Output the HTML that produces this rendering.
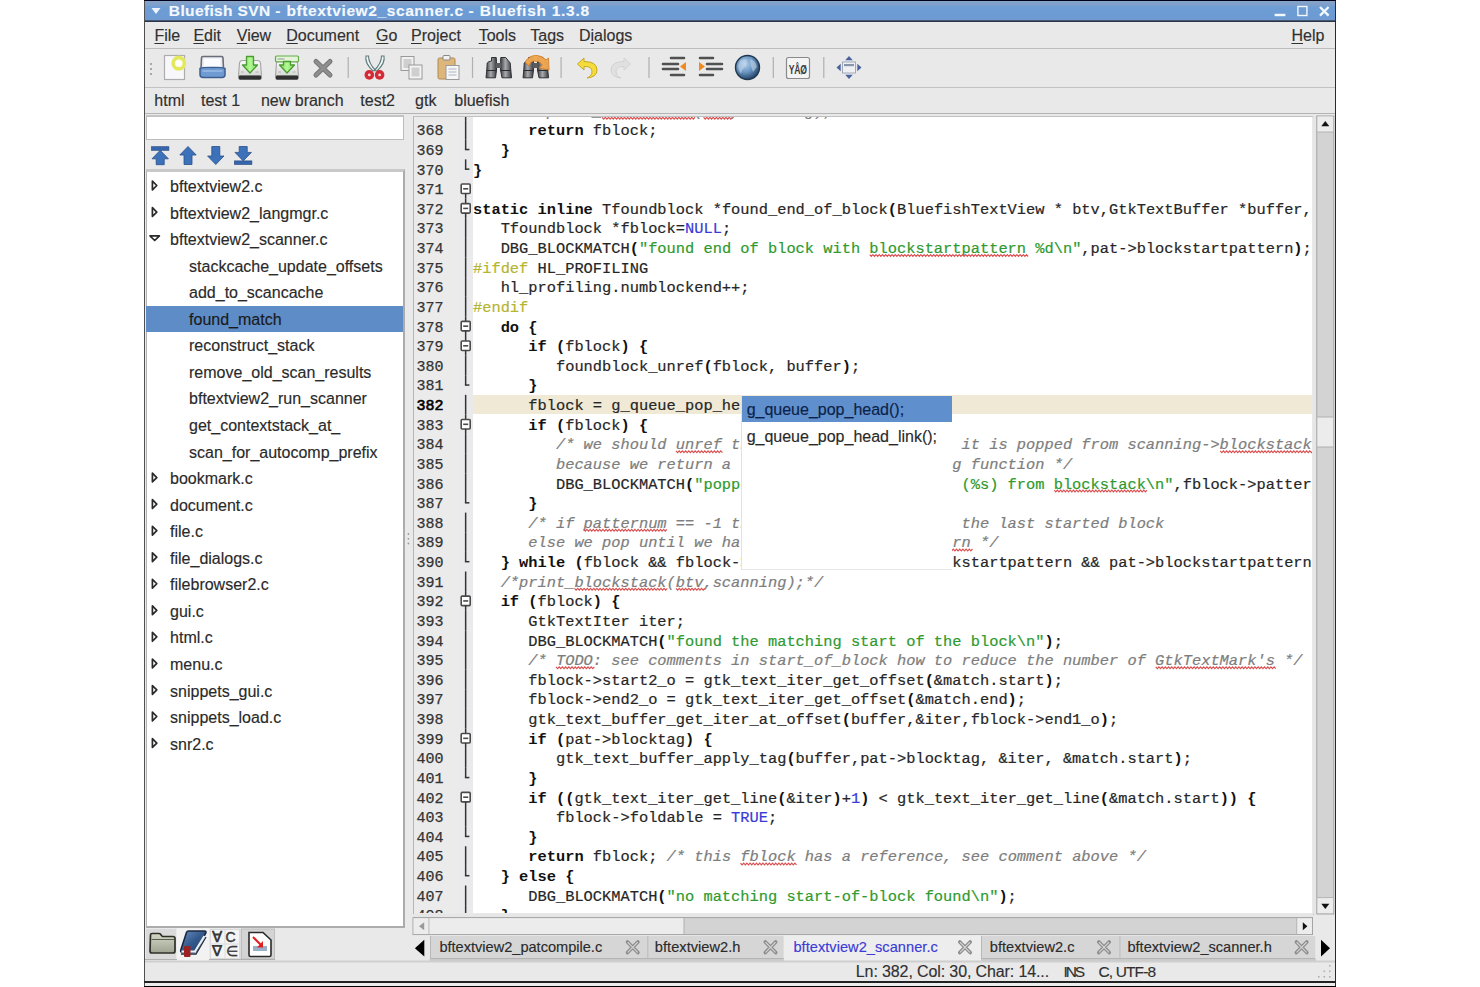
<!DOCTYPE html><html><head><meta charset="utf-8"><title>Bluefish</title><style>
*{box-sizing:border-box;margin:0;padding:0}
html,body{width:1480px;height:987px;overflow:hidden;background:#fff}
body{position:relative;font-family:"Liberation Sans",sans-serif;color:#222}
.a{position:absolute}
.t{position:absolute;white-space:pre;font-size:16px;line-height:18px;color:#303030;-webkit-text-stroke:0.15px currentColor}
.u{text-decoration:underline;text-decoration-thickness:1.2px;text-underline-offset:1.5px}
#code{position:absolute;left:414px;top:117px;width:898px;height:796px;overflow:hidden;background:#fff}
.ln{position:absolute;left:0;width:46px;white-space:pre;-webkit-text-stroke:0.25px #333;font-family:"Liberation Mono",monospace;font-size:15px;line-height:19.626px;color:#333;text-align:left;padding-left:2.5px}
.cl{position:absolute;left:59px;white-space:pre;-webkit-text-stroke:0.2px currentColor;font-family:"Liberation Mono",monospace;font-size:15.373px;line-height:19.626px;color:#262626}
.k{font-weight:bold;color:#111;-webkit-text-stroke:0}
.s{color:#2f9a2f}
.c{color:#7d7d7d;font-style:italic}
.p{color:#b5b531}
.b{color:#3a3ad8}
</style></head><body>
<div class="a" style="left:144px;top:0;width:1192px;height:987px;background:#e9e9e9"></div>
<div class="a" style="left:144px;top:0;width:1.2px;height:987px;background:#505050"></div>
<div class="a" style="left:1335px;top:0;width:1.3px;height:987px;background:#2a2a2a"></div>
<div class="a" style="left:144px;top:0;width:1192px;height:1px;background:#00001a"></div>
<div class="a" style="left:145px;top:1px;width:1190px;height:20px;background:linear-gradient(#86a3c6 0px,#7ea0cc 4px,#6e9dd5 6px,#6c9bd3 17px,#7299cf 19px)"></div>
<div class="a" style="left:145px;top:20px;width:1190px;height:2px;background:linear-gradient(#566a88,#1a2234)"></div>
<div class="t" style="left:168.87px;top:1.63px;font-size:15.50px;letter-spacing:0.361px;font-weight:bold;color:#f4f8fc;">Bluefish SVN -</div>
<div class="t" style="left:286.47px;top:1.63px;font-size:15.50px;letter-spacing:0.600px;font-weight:bold;color:#f4f8fc;">bftextview2_scanner.c</div>
<div class="t" style="left:468.57px;top:1.63px;font-size:15.50px;font-weight:bold;color:#f4f8fc;">-</div>
<div class="t" style="left:479.77px;top:1.63px;font-size:15.50px;letter-spacing:0.718px;font-weight:bold;color:#f4f8fc;">Bluefish 1.3.8</div>
<svg class="a" style="left:150px;top:6px" width="12" height="10"><path d="M1.5 2 L10.5 2 L6 8 Z" fill="#eef4fb"/></svg>
<svg class="a" style="left:0;top:0" width="1480" height="22"><rect x="1274.6" y="13.8" width="10.8" height="2.4" fill="#f2f8fc"/><rect x="1297.9" y="6.5" width="9" height="9" fill="none" stroke="#f2f8fc" stroke-width="1.4"/><path d="M1320 7 L1328.6 15.6 M1328.6 7 L1320 15.6" stroke="#f2f8fc" stroke-width="2.3"/></svg>
<div class="a" style="left:144px;top:981px;width:1192px;height:1.5px;background:#222"></div>
<div class="a" style="left:145px;top:982.5px;width:1190px;height:3.5px;background:#ececec"></div>
<div class="a" style="left:144px;top:986px;width:1192px;height:1px;background:#000"></div>
<div class="t" style="left:154.44px;top:26.96px;font-size:16.00px;"><span class="u">F</span>ile</div>
<div class="t" style="left:193.44px;top:26.96px;font-size:16.00px;"><span class="u">E</span>dit</div>
<div class="t" style="left:236.74px;top:26.96px;font-size:16.00px;"><span class="u">V</span>iew</div>
<div class="t" style="left:286.24px;top:26.96px;font-size:16.00px;"><span class="u">D</span>ocument</div>
<div class="t" style="left:375.94px;top:26.96px;font-size:16.00px;"><span class="u">G</span>o</div>
<div class="t" style="left:411.04px;top:26.96px;font-size:16.00px;"><span class="u">P</span>roject</div>
<div class="t" style="left:478.64px;top:26.96px;font-size:16.00px;"><span class="u">T</span>ools</div>
<div class="t" style="left:530.24px;top:26.96px;font-size:16.00px;">T<span class="u">a</span>gs</div>
<div class="t" style="left:578.94px;top:26.96px;font-size:16.00px;">D<span class="u">i</span>alogs</div>
<div class="t" style="left:1291.44px;top:26.96px;font-size:16.00px;"><span class="u">H</span>elp</div>
<div class="a" style="left:145px;top:47.5px;width:1190px;height:1px;background:#bdbdbd"></div>
<div class="a" style="left:145px;top:87px;width:1190px;height:1px;background:#c2c2c2"></div>
<div class="t" style="left:154.34px;top:92.06px;font-size:16.00px;">html</div>
<div class="t" style="left:200.94px;top:92.06px;font-size:16.00px;">test 1</div>
<div class="t" style="left:260.94px;top:92.06px;font-size:16.00px;">new branch</div>
<div class="t" style="left:360.34px;top:92.06px;font-size:16.00px;">test2</div>
<div class="t" style="left:415.04px;top:92.06px;font-size:16.00px;">gtk</div>
<div class="t" style="left:454.24px;top:92.06px;font-size:16.00px;">bluefish</div>
<div class="a" style="left:145px;top:113px;width:1190px;height:1px;background:#b4b4b4"></div>
<svg class="a" style="left:0;top:0" width="900" height="90" viewBox="0 0 900 90"><rect x="150" y="63" width="2" height="2" fill="#a8a8a8"/><rect x="150" y="68" width="2" height="2" fill="#a8a8a8"/><rect x="150" y="73" width="2" height="2" fill="#a8a8a8"/><rect x="347.6" y="57" width="1.2" height="21" fill="#b0b0b0"/><rect x="471.9" y="57" width="1.2" height="21" fill="#b0b0b0"/><rect x="560.5" y="57" width="1.2" height="21" fill="#b0b0b0"/><rect x="648.4" y="57" width="1.2" height="21" fill="#b0b0b0"/><rect x="772.7" y="57" width="1.2" height="21" fill="#b0b0b0"/><rect x="823.2" y="57" width="1.2" height="21" fill="#b0b0b0"/><rect x="164.5" y="55.5" width="20" height="24" fill="#f8f8fc" stroke="#acacac" stroke-width="1.2"/><circle cx="178.8" cy="63.2" r="7.8" fill="#f4f6b0" opacity="0.45"/><circle cx="178.8" cy="63.2" r="5.6" fill="#fcfcf0" stroke="#e4e85c" stroke-width="3.6"/><path d="M178.8 59.6 L179.9 62.2 L182.5 62.3 L180.5 64.1 L181.2 66.7 L178.8 65.3 L176.4 66.7 L177.1 64.1 L175.1 62.3 L177.7 62.2 Z" fill="#fff"/><path d="M201.5 58 Q201.5 56.5 203 56.5 L221.5 56.5 Q223 56.5 223 58 L223.5 69 L201 69 Z" fill="#e8ebf0" stroke="#6a6e78" stroke-width="1.6"/><rect x="204" y="58.5" width="16.5" height="10" fill="#fafcff"/><path d="M200 68.5 Q203 67 212.5 67.5 Q222 67 225 68.5 L225 74.5 Q225 77.5 222 77.5 L203 77.5 Q200 77.5 200 74.5 Z" fill="#6f9bd2" stroke="#3d5f90" stroke-width="1.5"/><path d="M202.5 71 L222.5 71" stroke="#a6c4ea" stroke-width="1.2"/><defs><linearGradient id="drv" x1="0" y1="0" x2="0" y2="1"><stop offset="0" stop-color="#fafafa"/><stop offset="1" stop-color="#d6d8d6"/></linearGradient><linearGradient id="arw" x1="0" y1="0" x2="1" y2="0"><stop offset="0" stop-color="#7ad860"/><stop offset="0.5" stop-color="#b4fa94"/><stop offset="1" stop-color="#7ad860"/></linearGradient></defs><path d="M238.5 76 L239.5 63 Q240.0 60.5 242.5 60.5 L257.5 60.5 Q260.0 60.5 260.5 63 L261.5 76 Z" fill="url(#drv)" stroke="#a4a4a4" stroke-width="1.1"/><rect x="238.5" y="75.5" width="23" height="4.2" rx="1.6" fill="#303030"/><path d="M241.0 72 h3 M255.5 72 h3" stroke="#b0b0b0" stroke-width="1"/><path d="M246.5 56.5 L253.5 56.5 L253.5 65 L257.5 65 L250 73 L242.5 65 L246.5 65 Z" fill="url(#arw)" stroke="#4c9a34" stroke-width="1.3" stroke-linejoin="round"/><path d="M275.5 76 L276.5 63 Q277.0 60.5 279.5 60.5 L294.5 60.5 Q297.0 60.5 297.5 63 L298.5 76 Z" fill="url(#drv)" stroke="#a4a4a4" stroke-width="1.1"/><rect x="275.5" y="75.5" width="23" height="4.2" rx="1.6" fill="#303030"/><path d="M278.0 72 h3 M292.5 72 h3" stroke="#b0b0b0" stroke-width="1"/><rect x="275.5" y="56" width="23" height="5.8" rx="1" fill="#e4f4d8" stroke="#62aa48" stroke-width="1.2"/><rect x="277.5" y="58" width="7" height="2" fill="#b8c8b0"/><path d="M283.5 61.5 L290.5 61.5 L290.5 65 L294.5 65 L287 73 L279.5 65 L283.5 65 Z" fill="url(#arw)" stroke="#4c9a34" stroke-width="1.3" stroke-linejoin="round"/><path d="M316 61.5 L330 75 M330 61.5 L316 75" stroke="#767676" stroke-width="5" stroke-linecap="round"/><path d="M316 61.5 L330 75 M330 61.5 L316 75" stroke="#8e8e8e" stroke-width="3" stroke-linecap="round"/><path d="M366 56 Q364.5 63 373 71 L375.5 70.5 Q368.5 63 368.5 56 Z" fill="#eef6f6" stroke="#5e7a7a" stroke-width="1.1"/><path d="M384 56 Q385.5 63 377 71 L374.5 70.5 Q381.5 63 381.5 56 Z" fill="#eef6f6" stroke="#5e7a7a" stroke-width="1.1"/><circle cx="369.3" cy="74.9" r="4.8" fill="#d42a36"/><circle cx="379.6" cy="74.9" r="4.8" fill="#d42a36"/><circle cx="369.3" cy="74.9" r="1.4" fill="#f6dada"/><circle cx="379.6" cy="74.9" r="1.4" fill="#f6dada"/><rect x="401" y="56.5" width="13" height="14" fill="#f0f0f0" stroke="#9a9a9a"/><rect x="403.5" y="59" width="8" height="9" fill="#cfcfcf"/><rect x="409" y="65" width="13" height="14" fill="#f4f4f4" stroke="#9a9a9a"/><rect x="411.5" y="67.5" width="8" height="9" fill="#cfcfcf"/><rect x="438" y="58" width="17" height="21" rx="1.5" fill="#dcb67a" stroke="#b08a50"/><rect x="443" y="55.5" width="7" height="4.5" rx="1" fill="#f2f2f2" stroke="#888"/><rect x="446" y="65.5" width="13" height="14" fill="#f6f6f6" stroke="#9a9a9a"/><path d="M448.5 69 h8 M448.5 72 h8 M448.5 75 h8" stroke="#a9b4c6" stroke-width="1.2"/><g transform="translate(0.0,0)"><defs><linearGradient id="bn485" x1="0" x2="1"><stop offset="0" stop-color="#3a3c40"/><stop offset="0.45" stop-color="#a8aaae"/><stop offset="1" stop-color="#3a3c40"/></linearGradient></defs><path d="M491.5 57.5 L496.2 57.5 L496.5 61.5 L496.5 70 L495.5 77.8 L486 77.8 L486.8 70 L487.2 63 Q488 61.5 491.5 61 Z" fill="url(#bn485)" stroke="#303236" stroke-width="1"/><path d="M500.8 57.5 L505.7 57.5 Q509 61.5 510.2 63 L510.8 70 L511.5 77.8 L502 77.8 L500.5 70 L500.5 61.5 Z" fill="url(#bn485)" stroke="#303236" stroke-width="1"/><rect x="496" y="63" width="5" height="5" fill="#5a5c60"/><path d="M486.6 70.5 H496 M501 70.5 H510.8" stroke="#2a2c30" stroke-width="1.2"/></g><g transform="translate(37.0,0)"><defs><linearGradient id="bn522" x1="0" x2="1"><stop offset="0" stop-color="#3a3c40"/><stop offset="0.45" stop-color="#a8aaae"/><stop offset="1" stop-color="#3a3c40"/></linearGradient></defs><path d="M491.5 57.5 L496.2 57.5 L496.5 61.5 L496.5 70 L495.5 77.8 L486 77.8 L486.8 70 L487.2 63 Q488 61.5 491.5 61 Z" fill="url(#bn522)" stroke="#303236" stroke-width="1"/><path d="M500.8 57.5 L505.7 57.5 Q509 61.5 510.2 63 L510.8 70 L511.5 77.8 L502 77.8 L500.5 70 L500.5 61.5 Z" fill="url(#bn522)" stroke="#303236" stroke-width="1"/><rect x="496" y="63" width="5" height="5" fill="#5a5c60"/><path d="M486.6 70.5 H496 M501 70.5 H510.8" stroke="#2a2c30" stroke-width="1.2"/></g><path d="M525 62 Q529 55 537 55.5 Q543 56 546 60 L548.5 58 L549 70 L539 68 L542.5 65 Q539 60.5 534 61 Q530 61.5 529 66 Z" fill="#f2a850" stroke="#d07a20" stroke-width="0.9" opacity="0.95"/><path d="M584 58 L577.5 64 L584 70 L584 66.5 Q592 66 592 71.5 Q592 76 587 78 Q597 77 597 70 Q597 61.5 584 61.5 Z" fill="#f4dc3c" stroke="#c8a820" stroke-width="1"/><path d="M624 58 L630.5 64 L624 70 L624 66.5 Q616 66 616 71.5 Q616 76 621 78 Q611 77 611 70 Q611 61.5 624 61.5 Z" fill="#e0e0e0" stroke="#d2d2d2" stroke-width="1"/><path d="M671 58 h13 M663 64 h15 M663 69 h15 M671 75 h13" stroke="#505050" stroke-width="2.6" stroke-linecap="round"/><path d="M686 62 L680 66.5 L686 71 Z" fill="#f08a20"/><path d="M700 58 h13 M707 64 h15 M707 69 h15 M700 75 h13" stroke="#505050" stroke-width="2.6" stroke-linecap="round"/><path d="M699 62 L705 66.5 L699 71 Z" fill="#f08a20"/><defs><radialGradient id="gl" cx="0.4" cy="0.35" r="0.7"><stop offset="0" stop-color="#b4d2ee"/><stop offset="0.5" stop-color="#6a96c2"/><stop offset="1" stop-color="#1c3a5c"/></radialGradient></defs><circle cx="747.5" cy="67.5" r="12" fill="url(#gl)" stroke="#203850" stroke-width="1.4"/><path d="M740 61 Q744 58 747 60 L746 66 Q742 69 741 74 Q738 70 738 66 Z M750 59 Q756 61 757 67 L753 72 L751 66 Z" fill="#c8d8ea" opacity="0.55"/><rect x="786.5" y="57.5" width="23" height="21" rx="2" fill="#f4f4f4" stroke="#8a8a8a" stroke-width="1.2"/><text transform="translate(788.8,73.5) scale(0.72,1)" font-family="Liberation Sans" font-weight="bold" font-size="12" fill="#3a3a3a" letter-spacing="-0.3">Y&#xC5;Ø</text><path d="M849 56 L852.8 60.2 L845.2 60.2 Z M849 79 L852.8 74.8 L845.2 74.8 Z M836.5 67.5 L840.7 63.7 L840.7 71.3 Z M861.5 67.5 L857.3 63.7 L857.3 71.3 Z" fill="#4a62a0"/><rect x="842.5" y="62" width="13" height="11" fill="#eef0f4" stroke="#a0a8b8" stroke-width="1"/><rect x="844" y="64" width="10" height="2.2" fill="#8a94aa"/></svg>
<div class="a" style="left:146px;top:115px;width:258px;height:25px;background:#fff;border:1px solid #bcbcbc;border-top:2px solid #c4c4c4"></div>
<svg class="a" style="left:0;top:0" width="420" height="175"><rect x="151.4" y="146.7" width="17.5" height="3.6" fill="#3566ad" stroke="#23477f" stroke-width="0.6"/><path d="M160.2 150.3 L168.4 158.8 L164.2 158.8 L164.2 164.7 L156.2 164.7 L156.2 158.8 L152.0 158.8 Z" fill="#3d72bb" stroke="#264f8c" stroke-width="0.8"/><path d="M188.0 146.5 L196.2 155.0 L192.0 155.0 L192.0 164.5 L184.0 164.5 L184.0 155.0 L179.8 155.0 Z" fill="#3d72bb" stroke="#264f8c" stroke-width="0.8"/><path d="M215.8 164.5 L224.0 156.0 L219.8 156.0 L219.8 146.5 L211.8 146.5 L211.8 156.0 L207.6 156.0 Z" fill="#3d72bb" stroke="#264f8c" stroke-width="0.8"/><rect x="234.4" y="160.9" width="17.5" height="3.6" fill="#3566ad" stroke="#23477f" stroke-width="0.6"/><path d="M243.2 160.9 L251.4 152.4 L247.2 152.4 L247.2 146.5 L239.2 146.5 L239.2 152.4 L235.0 152.4 Z" fill="#3d72bb" stroke="#264f8c" stroke-width="0.8"/></svg>
<div class="a" style="left:146px;top:169px;width:259px;height:759px;background:#fff;border-top:3px solid #c9c9c9;border-right:2px solid #acacac;border-bottom:2px solid #acacac;border-left:1.2px solid #b4b4b4"></div>
<div class="t" style="left:170.04px;top:178.06px;font-size:16.00px;color:#2a2a2a;">bftextview2.c</div>
<div class="t" style="left:170.04px;top:204.61px;font-size:16.00px;color:#2a2a2a;">bftextview2_langmgr.c</div>
<div class="t" style="left:170.04px;top:231.16px;font-size:16.00px;color:#2a2a2a;">bftextview2_scanner.c</div>
<div class="t" style="left:189.04px;top:257.71px;font-size:16.00px;color:#2a2a2a;">stackcache_update_offsets</div>
<div class="t" style="left:189.04px;top:284.26px;font-size:16.00px;color:#2a2a2a;">add_to_scancache</div>
<div class="a" style="left:146px;top:306.15px;width:257px;height:25.5px;background:#5d8cc7"></div>
<div class="t" style="left:189.04px;top:310.81px;font-size:16.00px;color:#1a1a1a;">found_match</div>
<div class="t" style="left:189.04px;top:337.36px;font-size:16.00px;color:#2a2a2a;">reconstruct_stack</div>
<div class="t" style="left:189.04px;top:363.91px;font-size:16.00px;color:#2a2a2a;">remove_old_scan_results</div>
<div class="t" style="left:189.04px;top:390.46px;font-size:16.00px;color:#2a2a2a;">bftextview2_run_scanner</div>
<div class="t" style="left:189.04px;top:417.01px;font-size:16.00px;color:#2a2a2a;">get_contextstack_at_</div>
<div class="t" style="left:189.04px;top:443.56px;font-size:16.00px;color:#2a2a2a;">scan_for_autocomp_prefix</div>
<div class="t" style="left:170.04px;top:470.11px;font-size:16.00px;color:#2a2a2a;">bookmark.c</div>
<div class="t" style="left:170.04px;top:496.66px;font-size:16.00px;color:#2a2a2a;">document.c</div>
<div class="t" style="left:170.04px;top:523.21px;font-size:16.00px;color:#2a2a2a;">file.c</div>
<div class="t" style="left:170.04px;top:549.76px;font-size:16.00px;color:#2a2a2a;">file_dialogs.c</div>
<div class="t" style="left:170.04px;top:576.31px;font-size:16.00px;color:#2a2a2a;">filebrowser2.c</div>
<div class="t" style="left:170.04px;top:602.86px;font-size:16.00px;color:#2a2a2a;">gui.c</div>
<div class="t" style="left:170.04px;top:629.41px;font-size:16.00px;color:#2a2a2a;">html.c</div>
<div class="t" style="left:170.04px;top:655.96px;font-size:16.00px;color:#2a2a2a;">menu.c</div>
<div class="t" style="left:170.04px;top:682.51px;font-size:16.00px;color:#2a2a2a;">snippets_gui.c</div>
<div class="t" style="left:170.04px;top:709.06px;font-size:16.00px;color:#2a2a2a;">snippets_load.c</div>
<div class="t" style="left:170.04px;top:735.61px;font-size:16.00px;color:#2a2a2a;">snr2.c</div>
<svg class="a" style="left:0;top:0" width="200" height="800"><path d="M152.4 181.10 L156.8 185.50 L152.4 189.90 Z" fill="none" stroke="#2a2a2a" stroke-width="1.7" stroke-linejoin="round"/><path d="M152.4 207.65 L156.8 212.05 L152.4 216.45 Z" fill="none" stroke="#2a2a2a" stroke-width="1.7" stroke-linejoin="round"/><path d="M150 235.90 L159.4 235.90 L154.7 240.50 Z" fill="none" stroke="#2a2a2a" stroke-width="1.7" stroke-linejoin="round"/><path d="M152.4 473.15 L156.8 477.55 L152.4 481.95 Z" fill="none" stroke="#2a2a2a" stroke-width="1.7" stroke-linejoin="round"/><path d="M152.4 499.70 L156.8 504.10 L152.4 508.50 Z" fill="none" stroke="#2a2a2a" stroke-width="1.7" stroke-linejoin="round"/><path d="M152.4 526.25 L156.8 530.65 L152.4 535.05 Z" fill="none" stroke="#2a2a2a" stroke-width="1.7" stroke-linejoin="round"/><path d="M152.4 552.80 L156.8 557.20 L152.4 561.60 Z" fill="none" stroke="#2a2a2a" stroke-width="1.7" stroke-linejoin="round"/><path d="M152.4 579.35 L156.8 583.75 L152.4 588.15 Z" fill="none" stroke="#2a2a2a" stroke-width="1.7" stroke-linejoin="round"/><path d="M152.4 605.90 L156.8 610.30 L152.4 614.70 Z" fill="none" stroke="#2a2a2a" stroke-width="1.7" stroke-linejoin="round"/><path d="M152.4 632.45 L156.8 636.85 L152.4 641.25 Z" fill="none" stroke="#2a2a2a" stroke-width="1.7" stroke-linejoin="round"/><path d="M152.4 659.00 L156.8 663.40 L152.4 667.80 Z" fill="none" stroke="#2a2a2a" stroke-width="1.7" stroke-linejoin="round"/><path d="M152.4 685.55 L156.8 689.95 L152.4 694.35 Z" fill="none" stroke="#2a2a2a" stroke-width="1.7" stroke-linejoin="round"/><path d="M152.4 712.10 L156.8 716.50 L152.4 720.90 Z" fill="none" stroke="#2a2a2a" stroke-width="1.7" stroke-linejoin="round"/><path d="M152.4 738.65 L156.8 743.05 L152.4 747.45 Z" fill="none" stroke="#2a2a2a" stroke-width="1.7" stroke-linejoin="round"/></svg>
<svg class="a" style="left:405px;top:530px" width="8" height="20"><circle cx="3.4" cy="4" r="0.9" fill="#999"/><circle cx="3.4" cy="8.8" r="0.9" fill="#999"/><circle cx="3.4" cy="13.5" r="0.9" fill="#999"/></svg>
<svg class="a" style="left:0;top:0" width="420" height="987"><rect x="145" y="928" width="260" height="33" fill="#e9e9e9"/><rect x="146" y="929" width="30" height="30" fill="#dadada"/><rect x="177" y="928" width="32" height="33" fill="#f2f2f2"/><rect x="210" y="929" width="31" height="30" fill="#dadada"/><rect x="241.5" y="929" width="33" height="30" fill="#d4d4d4" stroke="#bdbdbd" stroke-width="1"/><path d="M145 959.5 H177 M209 959.5 H275" stroke="#b0b0b0" stroke-width="1"/><defs><linearGradient id="fld" x1="0" y1="0" x2="0" y2="1"><stop offset="0" stop-color="#d4d8c6"/><stop offset="1" stop-color="#9ea290"/></linearGradient><linearGradient id="bk" x1="0" y1="0" x2="1" y2="1"><stop offset="0" stop-color="#6a8ec0"/><stop offset="0.5" stop-color="#34598c"/><stop offset="1" stop-color="#22406a"/></linearGradient></defs><path d="M150.5 935 Q150.5 933.5 152 933.5 L159 933.5 Q160.5 933.5 161.5 935.5 L162.5 936.5 L173 936.5 Q175 936.5 175 938.5 L175 951 Q175 953 173 953 L152 953 Q150 953 150 951 Z" fill="url(#fld)" stroke="#2e3028" stroke-width="1.7"/><path d="M151.5 939.5 L174 939.5" stroke="#5a5c50" stroke-width="1"/><path d="M188.5 931 L204.5 931 Q206.5 931 205.8 933 L196.5 950.5 Q195.8 952 194 952 L182 952 Q180.2 952 180.8 950 L186.5 932.5 Q187 931 188.5 931 Z" fill="url(#bk)" stroke="#18283e" stroke-width="1.6"/><path d="M181.5 951.5 L195 951.5 L204.5 936" stroke="#eef2f8" stroke-width="2.2" fill="none"/><path d="M181 954 L196 954 L206 937" stroke="#1c2c44" stroke-width="1.3" fill="none"/><rect x="184" y="946" width="6.5" height="11" rx="1" fill="#9c2222"/><rect x="211" y="930" width="28" height="28" fill="#f4f4f4"/><path d="M225 930 V958 M211 944 H239" stroke="#dcdcdc" stroke-width="1"/><text x="212.2" y="942.3" font-family="Liberation Sans" font-size="14.5" font-weight="bold" fill="#3a3a3a">&#x2200;</text><text x="225.6" y="942.3" font-family="Liberation Sans" font-size="14" fill="#3a3a3a" stroke="#3a3a3a" stroke-width="0.5">C</text><text x="212.2" y="956" font-family="Liberation Sans" font-size="14.5" font-weight="bold" fill="#3a3a3a">&#x2207;</text><text x="225.6" y="956" font-family="Liberation Sans" font-size="14" fill="#3a3a3a" stroke="#3a3a3a" stroke-width="0.4">&#x2208;</text><path d="M249 932.5 L263 932.5 L271 940 L271 955 Q271 956.5 269.5 956.5 L250.5 956.5 Q249 956.5 249 955 Z" fill="#fff" stroke="#2a2a2a" stroke-width="1.6"/><rect x="253" y="946" width="14" height="5" fill="#9ab0c8"/><path d="M253 937 L262 946" stroke="#e02020" stroke-width="2"/><path d="M263 947.5 L263 941 L257 947.5 Z" fill="#e02020"/></svg>
<div id="code"><div class="a" style="left:0;top:0;width:46px;height:796px;background:#ebebeb"></div><div class="a" style="left:46px;top:0;width:12.5px;height:796px;background:#eaeaed"></div><div class="a" style="left:58.5px;top:278.06px;width:840px;height:19.03px;background:#efe9d6"></div><div class="cl" style="top:-14.33px">      <span class="c">/*print_blockstack(btv,scanning);*/</span></div><div class="ln" style="top:-14.33px;">367</div><div class="cl" style="top:5.30px">      <span class="k">return</span> fblock;</div><div class="ln" style="top:5.30px;">368</div><div class="cl" style="top:24.93px">   <span class="k">}</span></div><div class="ln" style="top:24.93px;">369</div><div class="cl" style="top:44.55px"><span class="k">}</span></div><div class="ln" style="top:44.55px;">370</div><div class="cl" style="top:64.18px"></div><div class="ln" style="top:64.18px;">371</div><div class="cl" style="top:83.80px"><span class="k">static</span> <span class="k">inline</span> Tfoundblock *found_end_of_block<span class="k">(</span>BluefishTextView * btv,GtkTextBuffer *buffer,</div><div class="ln" style="top:83.80px;">372</div><div class="cl" style="top:103.43px">   Tfoundblock *fblock=<span class="b">NULL</span>;</div><div class="ln" style="top:103.43px;">373</div><div class="cl" style="top:123.06px">   DBG_BLOCKMATCH<span class="k">(</span><span class="s">"found end of block with blockstartpattern %d\n"</span>,pat-&gt;blockstartpattern<span class="k">)</span>;</div><div class="ln" style="top:123.06px;">374</div><div class="cl" style="top:142.68px"><span class="p">#ifdef</span> HL_PROFILING</div><div class="ln" style="top:142.68px;">375</div><div class="cl" style="top:162.31px">   hl_profiling.numblockend++;</div><div class="ln" style="top:162.31px;">376</div><div class="cl" style="top:181.93px"><span class="p">#endif</span></div><div class="ln" style="top:181.93px;">377</div><div class="cl" style="top:201.56px">   <span class="k">do</span> <span class="k">{</span></div><div class="ln" style="top:201.56px;">378</div><div class="cl" style="top:221.19px">      <span class="k">if</span> <span class="k">(</span>fblock<span class="k">)</span> <span class="k">{</span></div><div class="ln" style="top:221.19px;">379</div><div class="cl" style="top:240.81px">         foundblock_unref<span class="k">(</span>fblock, buffer<span class="k">)</span>;</div><div class="ln" style="top:240.81px;">380</div><div class="cl" style="top:260.44px">      <span class="k">}</span></div><div class="ln" style="top:260.44px;">381</div><div class="cl" style="top:280.06px">      fblock = g_queue_pop_he</div><div class="ln" style="top:280.06px;color:#000;-webkit-text-stroke:0.6px #000">382</div><div class="cl" style="top:299.69px">      <span class="k">if</span> <span class="k">(</span>fblock<span class="k">)</span> <span class="k">{</span></div><div class="ln" style="top:299.69px;">383</div><div class="cl" style="top:319.32px">         <span class="c">/* we should unref the foundblocks, because it is popped from scanning-&gt;blockstack</span></div><div class="ln" style="top:319.32px;">384</div><div class="cl" style="top:338.94px"><span class="c">         because we return a reference to the calling function */</span></div><div class="ln" style="top:338.94px;">385</div><div class="cl" style="top:358.57px">         DBG_BLOCKMATCH<span class="k">(</span><span class="s">"popped foundblock %p, id %d (%s) from blockstack\n"</span>,fblock-&gt;pattern<span class="k">)</span>;</div><div class="ln" style="top:358.57px;">386</div><div class="cl" style="top:378.19px">      <span class="k">}</span></div><div class="ln" style="top:378.19px;">387</div><div class="cl" style="top:397.82px">      <span class="c">/* if patternum == -1 then we should pop until the last started block</span></div><div class="ln" style="top:397.82px;">388</div><div class="cl" style="top:417.45px"><span class="c">      else we pop until we have found the blockpattern */</span></div><div class="ln" style="top:417.45px;">389</div><div class="cl" style="top:437.07px">   <span class="k">}</span> <span class="k">while</span> <span class="k">(</span>fblock &amp;&amp; fblock-&gt;patternum != pat-&gt;blockstartpattern &amp;&amp; pat-&gt;blockstartpattern</div><div class="ln" style="top:437.07px;">390</div><div class="cl" style="top:456.70px">   <span class="c">/*print_blockstack(btv,scanning);*/</span></div><div class="ln" style="top:456.70px;">391</div><div class="cl" style="top:476.32px">   <span class="k">if</span> <span class="k">(</span>fblock<span class="k">)</span> <span class="k">{</span></div><div class="ln" style="top:476.32px;">392</div><div class="cl" style="top:495.95px">      GtkTextIter iter;</div><div class="ln" style="top:495.95px;">393</div><div class="cl" style="top:515.58px">      DBG_BLOCKMATCH<span class="k">(</span><span class="s">"found the matching start of the block\n"</span><span class="k">)</span>;</div><div class="ln" style="top:515.58px;">394</div><div class="cl" style="top:535.20px">      <span class="c">/* TODO: see comments in start_of_block how to reduce the number of GtkTextMark's */</span></div><div class="ln" style="top:535.20px;">395</div><div class="cl" style="top:554.83px">      fblock-&gt;start2_o = gtk_text_iter_get_offset<span class="k">(</span>&amp;match.start<span class="k">)</span>;</div><div class="ln" style="top:554.83px;">396</div><div class="cl" style="top:574.45px">      fblock-&gt;end2_o = gtk_text_iter_get_offset<span class="k">(</span>&amp;match.end<span class="k">)</span>;</div><div class="ln" style="top:574.45px;">397</div><div class="cl" style="top:594.08px">      gtk_text_buffer_get_iter_at_offset<span class="k">(</span>buffer,&amp;iter,fblock-&gt;end1_o<span class="k">)</span>;</div><div class="ln" style="top:594.08px;">398</div><div class="cl" style="top:613.71px">      <span class="k">if</span> <span class="k">(</span>pat-&gt;blocktag<span class="k">)</span> <span class="k">{</span></div><div class="ln" style="top:613.71px;">399</div><div class="cl" style="top:633.33px">         gtk_text_buffer_apply_tag<span class="k">(</span>buffer,pat-&gt;blocktag, &amp;iter, &amp;match.start<span class="k">)</span>;</div><div class="ln" style="top:633.33px;">400</div><div class="cl" style="top:652.96px">      <span class="k">}</span></div><div class="ln" style="top:652.96px;">401</div><div class="cl" style="top:672.58px">      <span class="k">if</span> <span class="k">(</span><span class="k">(</span>gtk_text_iter_get_line<span class="k">(</span>&amp;iter<span class="k">)</span>+<span class="b">1</span><span class="k">)</span> &lt; gtk_text_iter_get_line<span class="k">(</span>&amp;match.start<span class="k">)</span><span class="k">)</span> <span class="k">{</span></div><div class="ln" style="top:672.58px;">402</div><div class="cl" style="top:692.21px">         fblock-&gt;foldable = <span class="b">TRUE</span>;</div><div class="ln" style="top:692.21px;">403</div><div class="cl" style="top:711.84px">      <span class="k">}</span></div><div class="ln" style="top:711.84px;">404</div><div class="cl" style="top:731.46px">      <span class="k">return</span> fblock; <span class="c">/* this fblock has a reference, see comment above */</span></div><div class="ln" style="top:731.46px;">405</div><div class="cl" style="top:751.09px">   <span class="k">}</span> <span class="k">else</span> <span class="k">{</span></div><div class="ln" style="top:751.09px;">406</div><div class="cl" style="top:770.71px">      DBG_BLOCKMATCH<span class="k">(</span><span class="s">"no matching start-of-block found\n"</span><span class="k">)</span>;</div><div class="ln" style="top:770.71px;">407</div><div class="cl" style="top:790.34px">   <span class="k">}</span></div><div class="ln" style="top:790.34px;">408</div><svg class="a" style="left:0;top:0" width="898" height="796"><path d="M188.1 0.3 L189.7 2.1 L191.3 0.3 L192.9 2.1 L194.5 0.3 L196.1 2.1 L197.7 0.3 L199.3 2.1 L200.9 0.3 L202.5 2.1 L204.1 0.3 L205.7 2.1 L207.3 0.3 L208.9 2.1 L210.5 0.3 L212.1 2.1 L213.7 0.3 L215.3 2.1 L216.9 0.3 L218.5 2.1 L220.1 0.3 L221.7 2.1 L223.3 0.3 L224.9 2.1 L226.5 0.3 L228.1 2.1 L229.7 0.3 L231.3 2.1 L232.9 0.3 L234.5 2.1 L236.1 0.3 L237.7 2.1 L239.3 0.3 L240.9 2.1 L242.5 0.3 L244.1 2.1 L245.7 0.3 L247.3 2.1 L248.9 0.3 L250.5 2.1 L252.1 0.3 L253.7 2.1 L255.3 0.3 L256.9 2.1 L258.5 0.3 L260.1 2.1 L261.7 0.3 L263.3 2.1 L264.9 0.3 L266.5 2.1 L268.1 0.3 L269.7 2.1 L271.3 0.3 L272.9 2.1 L274.6 0.3 L276.2 2.1 L277.8 0.3 L279.4 2.1 L281.0 0.3" stroke="#dc5050" stroke-width="1.15" fill="none"/><path d="M289.6 0.3 L291.2 2.1 L292.8 0.3 L294.4 2.1 L296.0 0.3 L297.6 2.1 L299.2 0.3 L300.8 2.1 L302.4 0.3 L304.0 2.1 L305.6 0.3 L307.2 2.1 L308.8 0.3 L310.4 2.1 L312.0 0.3 L313.6 2.1 L315.2 0.3 L316.8 2.1 L318.4 0.3" stroke="#dc5050" stroke-width="1.15" fill="none"/><path d="M455.7 137.7 L457.3 139.5 L458.9 137.7 L460.5 139.5 L462.1 137.7 L463.7 139.5 L465.3 137.7 L466.9 139.5 L468.5 137.7 L470.1 139.5 L471.7 137.7 L473.3 139.5 L474.9 137.7 L476.5 139.5 L478.1 137.7 L479.7 139.5 L481.3 137.7 L482.9 139.5 L484.5 137.7 L486.1 139.5 L487.7 137.7 L489.3 139.5 L490.9 137.7 L492.5 139.5 L494.1 137.7 L495.7 139.5 L497.3 137.7 L498.9 139.5 L500.5 137.7 L502.1 139.5 L503.7 137.7 L505.3 139.5 L506.9 137.7 L508.5 139.5 L510.1 137.7 L511.7 139.5 L513.3 137.7 L514.9 139.5 L516.5 137.7 L518.1 139.5 L519.7 137.7 L521.3 139.5 L522.9 137.7 L524.5 139.5 L526.1 137.7 L527.7 139.5 L529.3 137.7 L530.9 139.5 L532.5 137.7 L534.1 139.5 L535.7 137.7 L537.3 139.5 L538.9 137.7 L540.5 139.5 L542.1 137.7 L543.7 139.5 L545.3 137.7 L546.9 139.5 L548.5 137.7 L550.1 139.5 L551.7 137.7 L553.3 139.5 L554.9 137.7 L556.5 139.5 L558.1 137.7 L559.7 139.5 L561.3 137.7 L562.9 139.5 L564.5 137.7 L566.1 139.5 L567.7 137.7 L569.3 139.5 L570.9 137.7 L572.5 139.5 L574.1 137.7 L575.7 139.5 L577.3 137.7 L578.9 139.5 L580.5 137.7 L582.1 139.5 L583.7 137.7 L585.3 139.5 L586.9 137.7 L588.5 139.5 L590.1 137.7 L591.7 139.5 L593.3 137.7 L594.9 139.5 L596.5 137.7 L598.1 139.5 L599.7 137.7 L601.3 139.5 L602.9 137.7 L604.5 139.5 L606.1 137.7 L607.7 139.5 L609.3 137.7 L610.9 139.5 L612.5 137.7 L614.1 139.5" stroke="#dc5050" stroke-width="1.15" fill="none"/><path d="M262.0 333.9 L263.6 335.7 L265.2 333.9 L266.8 335.7 L268.4 333.9 L270.0 335.7 L271.6 333.9 L273.2 335.7 L274.8 333.9 L276.4 335.7 L278.0 333.9 L279.6 335.7 L281.2 333.9 L282.8 335.7 L284.4 333.9 L286.0 335.7 L287.6 333.9 L289.2 335.7 L290.8 333.9 L292.4 335.7 L294.0 333.9 L295.6 335.7 L297.2 333.9 L298.8 335.7 L300.4 333.9 L302.0 335.7 L303.6 333.9 L305.2 335.7 L306.8 333.9 L308.4 335.7" stroke="#dc5050" stroke-width="1.15" fill="none"/><path d="M806.2 333.9 L807.8 335.7 L809.4 333.9 L811.0 335.7 L812.6 333.9 L814.2 335.7 L815.8 333.9 L817.4 335.7 L819.0 333.9 L820.6 335.7 L822.2 333.9 L823.8 335.7 L825.4 333.9 L827.0 335.7 L828.6 333.9 L830.2 335.7 L831.8 333.9 L833.4 335.7 L835.0 333.9 L836.6 335.7 L838.2 333.9 L839.8 335.7 L841.4 333.9 L843.0 335.7 L844.6 333.9 L846.2 335.7 L847.8 333.9 L849.4 335.7 L851.0 333.9 L852.6 335.7 L854.2 333.9 L855.8 335.7 L857.4 333.9 L859.0 335.7 L860.6 333.9 L862.2 335.7 L863.8 333.9 L865.4 335.7 L867.0 333.9 L868.6 335.7 L870.2 333.9 L871.8 335.7 L873.4 333.9 L875.0 335.7 L876.6 333.9 L878.2 335.7 L879.8 333.9 L881.4 335.7 L883.0 333.9 L884.6 335.7 L886.2 333.9 L887.8 335.7 L889.4 333.9 L891.0 335.7 L892.6 333.9 L894.2 335.7 L895.8 333.9 L897.4 335.7 L899.0 333.9" stroke="#dc5050" stroke-width="1.15" fill="none"/><path d="M640.2 373.2 L641.8 375.0 L643.4 373.2 L645.0 375.0 L646.6 373.2 L648.2 375.0 L649.8 373.2 L651.4 375.0 L653.0 373.2 L654.6 375.0 L656.2 373.2 L657.8 375.0 L659.4 373.2 L661.0 375.0 L662.6 373.2 L664.2 375.0 L665.8 373.2 L667.4 375.0 L669.0 373.2 L670.6 375.0 L672.2 373.2 L673.8 375.0 L675.4 373.2 L677.0 375.0 L678.6 373.2 L680.2 375.0 L681.8 373.2 L683.4 375.0 L685.0 373.2 L686.6 375.0 L688.2 373.2 L689.8 375.0 L691.4 373.2 L693.0 375.0 L694.6 373.2 L696.2 375.0 L697.8 373.2 L699.4 375.0 L701.0 373.2 L702.6 375.0 L704.2 373.2 L705.8 375.0 L707.4 373.2 L709.0 375.0 L710.6 373.2 L712.2 375.0 L713.8 373.2 L715.4 375.0 L717.0 373.2 L718.6 375.0 L720.2 373.2 L721.8 375.0 L723.4 373.2 L725.0 375.0 L726.6 373.2 L728.2 375.0 L729.8 373.2 L731.4 375.0 L733.0 373.2" stroke="#dc5050" stroke-width="1.15" fill="none"/><path d="M169.7 412.4 L171.3 414.2 L172.9 412.4 L174.5 414.2 L176.1 412.4 L177.7 414.2 L179.3 412.4 L180.9 414.2 L182.5 412.4 L184.1 414.2 L185.7 412.4 L187.3 414.2 L188.9 412.4 L190.5 414.2 L192.1 412.4 L193.7 414.2 L195.3 412.4 L196.9 414.2 L198.5 412.4 L200.1 414.2 L201.7 412.4 L203.3 414.2 L204.9 412.4 L206.5 414.2 L208.1 412.4 L209.7 414.2 L211.3 412.4 L212.9 414.2 L214.5 412.4 L216.1 414.2 L217.7 412.4 L219.3 414.2 L220.9 412.4 L222.5 414.2 L224.1 412.4 L225.7 414.2 L227.3 412.4 L228.9 414.2 L230.5 412.4 L232.1 414.2 L233.7 412.4 L235.3 414.2 L236.9 412.4 L238.5 414.2 L240.1 412.4 L241.7 414.2 L243.3 412.4 L244.9 414.2 L246.5 412.4 L248.1 414.2 L249.7 412.4 L251.3 414.2 L252.9 412.4" stroke="#dc5050" stroke-width="1.15" fill="none"/><path d="M446.5 432.0 L448.1 433.8 L449.7 432.0 L451.3 433.8 L452.9 432.0 L454.5 433.8 L456.1 432.0 L457.7 433.8 L459.3 432.0 L460.9 433.8 L462.5 432.0 L464.1 433.8 L465.7 432.0 L467.3 433.8 L468.9 432.0 L470.5 433.8 L472.1 432.0 L473.7 433.8 L475.3 432.0 L476.9 433.8 L478.5 432.0 L480.1 433.8 L481.7 432.0 L483.3 433.8 L484.9 432.0 L486.5 433.8 L488.1 432.0 L489.7 433.8 L491.3 432.0 L492.9 433.8 L494.5 432.0 L496.1 433.8 L497.7 432.0 L499.3 433.8 L500.9 432.0 L502.5 433.8 L504.1 432.0 L505.7 433.8 L507.3 432.0 L508.9 433.8 L510.5 432.0 L512.1 433.8 L513.7 432.0 L515.3 433.8 L516.9 432.0 L518.5 433.8 L520.1 432.0 L521.7 433.8 L523.3 432.0 L524.9 433.8 L526.5 432.0 L528.1 433.8 L529.7 432.0 L531.3 433.8 L532.9 432.0 L534.5 433.8 L536.1 432.0 L537.7 433.8 L539.3 432.0 L540.9 433.8 L542.5 432.0 L544.1 433.8 L545.7 432.0 L547.3 433.8 L548.9 432.0 L550.5 433.8 L552.1 432.0 L553.7 433.8 L555.3 432.0 L556.9 433.8 L558.5 432.0" stroke="#dc5050" stroke-width="1.15" fill="none"/><path d="M160.5 471.3 L162.1 473.1 L163.7 471.3 L165.3 473.1 L166.9 471.3 L168.5 473.1 L170.1 471.3 L171.7 473.1 L173.3 471.3 L174.9 473.1 L176.5 471.3 L178.1 473.1 L179.7 471.3 L181.3 473.1 L182.9 471.3 L184.5 473.1 L186.1 471.3 L187.7 473.1 L189.3 471.3 L190.9 473.1 L192.5 471.3 L194.1 473.1 L195.7 471.3 L197.3 473.1 L198.9 471.3 L200.5 473.1 L202.1 471.3 L203.7 473.1 L205.3 471.3 L206.9 473.1 L208.5 471.3 L210.1 473.1 L211.7 471.3 L213.3 473.1 L214.9 471.3 L216.5 473.1 L218.1 471.3 L219.7 473.1 L221.3 471.3 L222.9 473.1 L224.5 471.3 L226.1 473.1 L227.7 471.3 L229.3 473.1 L230.9 471.3 L232.5 473.1 L234.1 471.3 L235.7 473.1 L237.3 471.3 L238.9 473.1 L240.5 471.3 L242.1 473.1 L243.7 471.3 L245.3 473.1 L246.9 471.3 L248.5 473.1 L250.1 471.3 L251.7 473.1 L253.3 471.3" stroke="#dc5050" stroke-width="1.15" fill="none"/><path d="M262.0 471.3 L263.6 473.1 L265.2 471.3 L266.8 473.1 L268.4 471.3 L270.0 473.1 L271.6 471.3 L273.2 473.1 L274.8 471.3 L276.4 473.1 L278.0 471.3 L279.6 473.1 L281.2 471.3 L282.8 473.1 L284.4 471.3 L286.0 473.1 L287.6 471.3 L289.2 473.1 L290.8 471.3" stroke="#dc5050" stroke-width="1.15" fill="none"/><path d="M142.0 549.8 L143.6 551.6 L145.2 549.8 L146.8 551.6 L148.4 549.8 L150.0 551.6 L151.6 549.8 L153.2 551.6 L154.8 549.8 L156.4 551.6 L158.0 549.8 L159.6 551.6 L161.2 549.8 L162.8 551.6 L164.4 549.8 L166.0 551.6 L167.6 549.8 L169.2 551.6 L170.8 549.8 L172.4 551.6 L174.0 549.8 L175.6 551.6 L177.2 549.8 L178.8 551.6 L180.4 549.8" stroke="#dc5050" stroke-width="1.15" fill="none"/><path d="M741.7 549.8 L743.3 551.6 L744.9 549.8 L746.5 551.6 L748.1 549.8 L749.7 551.6 L751.3 549.8 L752.9 551.6 L754.5 549.8 L756.1 551.6 L757.7 549.8 L759.3 551.6 L760.9 549.8 L762.5 551.6 L764.1 549.8 L765.7 551.6 L767.3 549.8 L768.9 551.6 L770.5 549.8 L772.1 551.6 L773.7 549.8 L775.3 551.6 L776.9 549.8 L778.5 551.6 L780.1 549.8 L781.7 551.6 L783.3 549.8 L784.9 551.6 L786.5 549.8 L788.1 551.6 L789.7 549.8 L791.3 551.6 L792.9 549.8 L794.5 551.6 L796.1 549.8 L797.7 551.6 L799.3 549.8 L800.9 551.6 L802.5 549.8 L804.1 551.6 L805.7 549.8 L807.3 551.6 L808.9 549.8 L810.5 551.6 L812.1 549.8 L813.7 551.6 L815.3 549.8 L816.9 551.6 L818.5 549.8 L820.1 551.6 L821.7 549.8 L823.3 551.6 L824.9 549.8 L826.5 551.6 L828.1 549.8 L829.7 551.6 L831.3 549.8 L832.9 551.6 L834.5 549.8 L836.1 551.6 L837.7 549.8 L839.3 551.6 L840.9 549.8 L842.5 551.6 L844.1 549.8 L845.7 551.6 L847.3 549.8 L848.9 551.6 L850.5 549.8 L852.1 551.6 L853.7 549.8 L855.3 551.6 L856.9 549.8 L858.5 551.6 L860.1 549.8 L861.7 551.6" stroke="#dc5050" stroke-width="1.15" fill="none"/><path d="M326.5 746.1 L328.1 747.9 L329.7 746.1 L331.3 747.9 L332.9 746.1 L334.5 747.9 L336.1 746.1 L337.7 747.9 L339.3 746.1 L340.9 747.9 L342.5 746.1 L344.1 747.9 L345.7 746.1 L347.3 747.9 L348.9 746.1 L350.5 747.9 L352.1 746.1 L353.7 747.9 L355.3 746.1 L356.9 747.9 L358.5 746.1 L360.1 747.9 L361.7 746.1 L363.3 747.9 L364.9 746.1 L366.5 747.9 L368.1 746.1 L369.7 747.9 L371.3 746.1 L372.9 747.9 L374.5 746.1 L376.1 747.9 L377.7 746.1 L379.3 747.9 L380.9 746.1 L382.5 747.9" stroke="#dc5050" stroke-width="1.15" fill="none"/></svg><svg class="a" style="left:0;top:0" width="60" height="796"><rect x="50.9" y="-16.53" width="1.5" height="19.63" fill="#333"/><rect x="50.9" y="3.10" width="1.5" height="19.63" fill="#333"/><rect x="50.9" y="22.73" width="1.5" height="9.81" fill="#333"/><rect x="50.9" y="31.79" width="4.5" height="1.5" fill="#333"/><rect x="50.9" y="42.35" width="1.5" height="9.81" fill="#333"/><rect x="50.9" y="51.42" width="4.5" height="1.5" fill="#333"/><rect x="47.2" y="66.99" width="9" height="9.5" rx="1" fill="#fff" stroke="#4a4a4a" stroke-width="1.6"/><rect x="49.2" y="70.99" width="5" height="1.6" fill="#4a4a4a"/><rect x="50.9" y="76.49" width="1.5" height="5.11" fill="#333"/><rect x="50.9" y="81.60" width="1.5" height="4.81" fill="#333"/><rect x="47.2" y="86.62" width="9" height="9.5" rx="1" fill="#fff" stroke="#4a4a4a" stroke-width="1.6"/><rect x="49.2" y="90.62" width="5" height="1.6" fill="#4a4a4a"/><rect x="50.9" y="96.12" width="1.5" height="5.11" fill="#333"/><rect x="50.9" y="101.23" width="1.5" height="19.63" fill="#333"/><rect x="50.9" y="120.86" width="1.5" height="19.63" fill="#333"/><rect x="50.9" y="140.48" width="1.5" height="19.63" fill="#333"/><rect x="50.9" y="160.11" width="1.5" height="19.63" fill="#333"/><rect x="50.9" y="179.73" width="1.5" height="19.63" fill="#333"/><rect x="50.9" y="199.36" width="1.5" height="4.81" fill="#333"/><rect x="47.2" y="204.37" width="9" height="9.5" rx="1" fill="#fff" stroke="#4a4a4a" stroke-width="1.6"/><rect x="49.2" y="208.37" width="5" height="1.6" fill="#4a4a4a"/><rect x="50.9" y="213.87" width="1.5" height="5.11" fill="#333"/><rect x="50.9" y="218.99" width="1.5" height="4.81" fill="#333"/><rect x="47.2" y="224.00" width="9" height="9.5" rx="1" fill="#fff" stroke="#4a4a4a" stroke-width="1.6"/><rect x="49.2" y="228.00" width="5" height="1.6" fill="#4a4a4a"/><rect x="50.9" y="233.50" width="1.5" height="5.11" fill="#333"/><rect x="50.9" y="238.61" width="1.5" height="19.63" fill="#333"/><rect x="50.9" y="258.24" width="1.5" height="9.81" fill="#333"/><rect x="50.9" y="267.30" width="4.5" height="1.5" fill="#333"/><rect x="50.9" y="277.86" width="1.5" height="19.63" fill="#333"/><rect x="50.9" y="297.49" width="1.5" height="4.81" fill="#333"/><rect x="47.2" y="302.50" width="9" height="9.5" rx="1" fill="#fff" stroke="#4a4a4a" stroke-width="1.6"/><rect x="49.2" y="306.50" width="5" height="1.6" fill="#4a4a4a"/><rect x="50.9" y="312.00" width="1.5" height="5.11" fill="#333"/><rect x="50.9" y="317.12" width="1.5" height="19.63" fill="#333"/><rect x="50.9" y="336.74" width="1.5" height="19.63" fill="#333"/><rect x="50.9" y="356.37" width="1.5" height="19.63" fill="#333"/><rect x="50.9" y="375.99" width="1.5" height="9.81" fill="#333"/><rect x="50.9" y="385.06" width="4.5" height="1.5" fill="#333"/><rect x="50.9" y="395.62" width="1.5" height="19.63" fill="#333"/><rect x="50.9" y="415.25" width="1.5" height="19.63" fill="#333"/><rect x="50.9" y="434.87" width="1.5" height="9.81" fill="#333"/><rect x="50.9" y="443.94" width="4.5" height="1.5" fill="#333"/><rect x="50.9" y="454.50" width="1.5" height="19.63" fill="#333"/><rect x="50.9" y="474.12" width="1.5" height="4.81" fill="#333"/><rect x="47.2" y="479.14" width="9" height="9.5" rx="1" fill="#fff" stroke="#4a4a4a" stroke-width="1.6"/><rect x="49.2" y="483.14" width="5" height="1.6" fill="#4a4a4a"/><rect x="50.9" y="488.64" width="1.5" height="5.11" fill="#333"/><rect x="50.9" y="493.75" width="1.5" height="19.63" fill="#333"/><rect x="50.9" y="513.38" width="1.5" height="19.63" fill="#333"/><rect x="50.9" y="533.00" width="1.5" height="19.63" fill="#333"/><rect x="50.9" y="552.63" width="1.5" height="19.63" fill="#333"/><rect x="50.9" y="572.25" width="1.5" height="19.63" fill="#333"/><rect x="50.9" y="591.88" width="1.5" height="19.63" fill="#333"/><rect x="50.9" y="611.51" width="1.5" height="4.81" fill="#333"/><rect x="47.2" y="616.52" width="9" height="9.5" rx="1" fill="#fff" stroke="#4a4a4a" stroke-width="1.6"/><rect x="49.2" y="620.52" width="5" height="1.6" fill="#4a4a4a"/><rect x="50.9" y="626.02" width="1.5" height="5.11" fill="#333"/><rect x="50.9" y="631.13" width="1.5" height="19.63" fill="#333"/><rect x="50.9" y="650.76" width="1.5" height="9.81" fill="#333"/><rect x="50.9" y="659.82" width="4.5" height="1.5" fill="#333"/><rect x="47.2" y="675.40" width="9" height="9.5" rx="1" fill="#fff" stroke="#4a4a4a" stroke-width="1.6"/><rect x="49.2" y="679.40" width="5" height="1.6" fill="#4a4a4a"/><rect x="50.9" y="684.90" width="1.5" height="5.11" fill="#333"/><rect x="50.9" y="690.01" width="1.5" height="19.63" fill="#333"/><rect x="50.9" y="709.64" width="1.5" height="9.81" fill="#333"/><rect x="50.9" y="718.70" width="4.5" height="1.5" fill="#333"/><rect x="50.9" y="729.26" width="1.5" height="19.63" fill="#333"/><rect x="50.9" y="748.89" width="1.5" height="9.81" fill="#333"/><rect x="50.9" y="757.95" width="4.5" height="1.5" fill="#333"/><rect x="50.9" y="768.51" width="1.5" height="19.63" fill="#333"/><rect x="50.9" y="788.14" width="1.5" height="19.63" fill="#333"/></svg></div>
<div class="a" style="left:412.5px;top:115.5px;width:901px;height:799px;border:1px solid #b6b6b6;border-top:1.2px solid #c0c0c0"></div>
<div class="a" style="left:741px;top:395.5px;width:211px;height:174.5px;background:#fff;border-left:1px solid #e2e2e2;border-bottom:1px solid #e6e6e6"></div>
<div class="a" style="left:742px;top:395.8px;width:210px;height:26px;background:#5f8fcc"></div>
<div class="t" style="left:746.64px;top:401.16px;font-size:16.00px;color:#0c2248;">g_queue_pop_head();</div>
<div class="t" style="left:746.64px;top:427.86px;font-size:16.00px;color:#2a2a2a;">g_queue_pop_head_link();</div>
<svg class="a" style="left:0;top:0" width="1480" height="987"><rect x="1313" y="116" width="4" height="798" fill="#e6e6e6"/><rect x="1316.8" y="116" width="17" height="798" fill="#d3d3d3" stroke="#a4a4a4" stroke-width="1"/><rect x="1317.5" y="116.5" width="15.6" height="15.5" fill="#ececec"/><path d="M1317 132 H1333.5" stroke="#b4b4b4" stroke-width="1"/><path d="M1321.3 126.2 L1325.3 121 L1329.3 126.2 Z" fill="#111"/><rect x="1317.5" y="897.6" width="15.6" height="15.5" fill="#ececec"/><path d="M1317 897.6 H1333.5" stroke="#b4b4b4" stroke-width="1"/><path d="M1321.3 903.8 L1325.3 909 L1329.3 903.8 Z" fill="#111"/><rect x="1317.5" y="417" width="15.6" height="30" fill="#ececec"/><path d="M1317 417 H1333.5 M1317 447 H1333.5" stroke="#b0b0b0" stroke-width="1"/><rect x="413" y="914" width="900" height="3.5" fill="#e6e6e6"/><rect x="413" y="917.6" width="899.5" height="17" fill="#d3d3d3" stroke="#a4a4a4" stroke-width="1"/><rect x="413.5" y="918.2" width="15.5" height="15.8" fill="#ececec"/><path d="M429 918 V934.5" stroke="#b4b4b4" stroke-width="1"/><path d="M424.2 922.2 L419 926.2 L424.2 930.2 Z" fill="#999"/><rect x="429.5" y="918.2" width="254.5" height="15.8" fill="#ececec"/><path d="M684 918 V934.5" stroke="#b0b0b0" stroke-width="1"/><rect x="1296.7" y="918.2" width="15.3" height="15.8" fill="#ececec"/><path d="M1296.7 918 V934.5" stroke="#b4b4b4" stroke-width="1"/><path d="M1302.8 922.2 L1307.4 926.2 L1302.8 930.2 Z" fill="#111"/></svg>
<svg class="a" style="left:0;top:0" width="1480" height="987"><rect x="413" y="935.5" width="922" height="25" fill="#e9e9e9"/><path d="M424.3 939.8 L414.9 948.2 L424.3 956.6 Z" fill="#000"/><path d="M1321 939.8 L1330 948.2 L1321 956.6 Z" fill="#000"/><rect x="430.0" y="936" width="217.3" height="23" fill="#d6d6d6"/><path d="M430.5 936 V959" stroke="#b8b8b8" stroke-width="1"/><path d="M430.0 958.5 H647.3" stroke="#b4b4b4" stroke-width="1"/><path d="M627.5 942.0 L637.9 952.6 M637.9 942.0 L627.5 952.6" stroke="#8c8c8c" stroke-width="3.6" stroke-linecap="round"/><path d="M628.0 942.5 L637.4 952.1 M637.4 942.5 L628.0 952.1" stroke="#d4d4d4" stroke-width="1.1" stroke-linecap="round"/><rect x="647.3" y="936" width="136.5" height="23" fill="#d6d6d6"/><path d="M647.8 936 V959" stroke="#b8b8b8" stroke-width="1"/><path d="M647.3 958.5 H783.8" stroke="#b4b4b4" stroke-width="1"/><path d="M765.3 942.0 L775.7 952.6 M775.7 942.0 L765.3 952.6" stroke="#8c8c8c" stroke-width="3.6" stroke-linecap="round"/><path d="M765.8 942.5 L775.2 952.1 M775.2 942.5 L765.8 952.1" stroke="#d4d4d4" stroke-width="1.1" stroke-linecap="round"/><rect x="783.8" y="935.3" width="197.2" height="25" fill="#ededed"/><path d="M959.8 942.0 L970.2 952.6 M970.2 942.0 L959.8 952.6" stroke="#8c8c8c" stroke-width="3.6" stroke-linecap="round"/><path d="M960.3 942.5 L969.7 952.1 M969.7 942.5 L960.3 952.1" stroke="#d4d4d4" stroke-width="1.1" stroke-linecap="round"/><rect x="981.0" y="936" width="138.4" height="23" fill="#d6d6d6"/><path d="M981.5 936 V959" stroke="#b8b8b8" stroke-width="1"/><path d="M981.0 958.5 H1119.4" stroke="#b4b4b4" stroke-width="1"/><path d="M1098.8 942.0 L1109.2 952.6 M1109.2 942.0 L1098.8 952.6" stroke="#8c8c8c" stroke-width="3.6" stroke-linecap="round"/><path d="M1099.3 942.5 L1108.7 952.1 M1108.7 942.5 L1099.3 952.1" stroke="#d4d4d4" stroke-width="1.1" stroke-linecap="round"/><rect x="1119.4" y="936" width="195.8" height="23" fill="#d6d6d6"/><path d="M1119.9 936 V959" stroke="#b8b8b8" stroke-width="1"/><path d="M1119.4 958.5 H1315.2" stroke="#b4b4b4" stroke-width="1"/><path d="M1296.4 942.0 L1306.8 952.6 M1306.8 942.0 L1296.4 952.6" stroke="#8c8c8c" stroke-width="3.6" stroke-linecap="round"/><path d="M1296.9 942.5 L1306.3 952.1 M1306.3 942.5 L1296.9 952.1" stroke="#d4d4d4" stroke-width="1.1" stroke-linecap="round"/><path d="M429.5 960 H783.8 M981 960 H1316" stroke="#aaaaaa" stroke-width="1"/><rect x="145" y="960.5" width="1190" height="2" fill="#cfcfcf"/></svg>
<div class="t" style="left:439.42px;top:937.94px;font-size:14.60px;letter-spacing:-0.012px;color:#2a2a2a;">bftextview2_patcompile.c</div>
<div class="t" style="left:654.82px;top:937.94px;font-size:14.60px;letter-spacing:0.040px;color:#2a2a2a;">bftextview2.h</div>
<div class="t" style="left:793.42px;top:937.94px;font-size:14.60px;letter-spacing:0.040px;color:#3b3bd6;">bftextview2_scanner.c</div>
<div class="t" style="left:989.82px;top:937.94px;font-size:14.60px;letter-spacing:0.024px;color:#2a2a2a;">bftextview2.c</div>
<div class="t" style="left:1127.42px;top:937.94px;font-size:14.60px;letter-spacing:-0.001px;color:#2a2a2a;">bftextview2_scanner.h</div>
<div class="t" style="left:855.84px;top:963.26px;font-size:16.00px;letter-spacing:-0.117px;">Ln: 382, Col: 30, Char: 14...</div>
<div class="t" style="left:1063.57px;top:963.43px;font-size:15.50px;letter-spacing:-2.172px;">INS</div>
<div class="t" style="left:1098.47px;top:963.43px;font-size:15.50px;letter-spacing:-0.874px;">C, UTF-8</div>
<svg class="a" style="left:0;top:0" width="1480" height="987"><rect x="1329.0" y="965.0" width="1.6" height="1.6" fill="#b0b0b0"/><rect x="1323.5" y="970.5" width="1.6" height="1.6" fill="#b0b0b0"/><rect x="1329.0" y="970.5" width="1.6" height="1.6" fill="#b0b0b0"/><rect x="1318.0" y="976.0" width="1.6" height="1.6" fill="#b0b0b0"/><rect x="1323.5" y="976.0" width="1.6" height="1.6" fill="#b0b0b0"/><rect x="1329.0" y="976.0" width="1.6" height="1.6" fill="#b0b0b0"/></svg>
</body></html>
